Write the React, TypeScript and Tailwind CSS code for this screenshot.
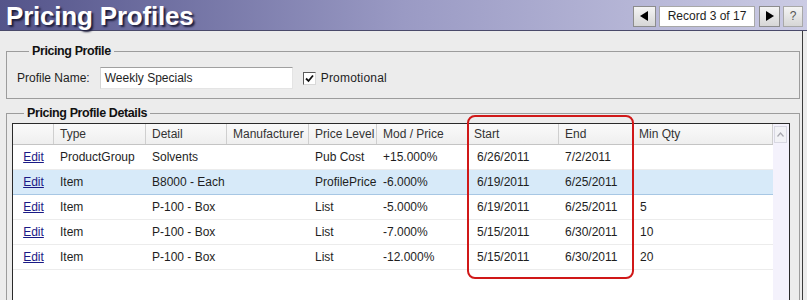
import React from 'react';

interface Row {
  type: string;
  detail: string;
  mfr: string;
  level: string;
  mod: string;
  start: string;
  end: string;
  qty: string;
  selected?: boolean;
}

const rows: Row[] = [
  { type: 'ProductGroup', detail: 'Solvents', mfr: '', level: 'Pub Cost', mod: '+15.000%', start: '6/26/2011', end: '7/2/2011', qty: '' },
  { type: 'Item', detail: 'B8000 - Each', mfr: '', level: 'ProfilePrice', mod: '-6.000%', start: '6/19/2011', end: '6/25/2011', qty: '', selected: true },
  { type: 'Item', detail: 'P-100 - Box', mfr: '', level: 'List', mod: '-5.000%', start: '6/19/2011', end: '6/25/2011', qty: '5' },
  { type: 'Item', detail: 'P-100 - Box', mfr: '', level: 'List', mod: '-7.000%', start: '5/15/2011', end: '6/30/2011', qty: '10' },
  { type: 'Item', detail: 'P-100 - Box', mfr: '', level: 'List', mod: '-12.000%', start: '5/15/2011', end: '6/30/2011', qty: '20' },
];

const headers = ['', 'Type', 'Detail', 'Manufacturer', 'Price Level', 'Mod / Price', 'Start', 'End', 'Min Qty'];

const NavButton: React.FC<{ children: React.ReactNode; className?: string }> = ({ children, className }) => (
  <div
    className={`h-[21px] flex items-center justify-center border border-[#8c8c8c] bg-gradient-to-b from-[#f4f4f4] to-[#d6d6d6] ${className ?? ''}`}
  >
    {children}
  </div>
);

export default function App() {
  return (
    <div
      className="relative w-[807px] h-[300px] overflow-hidden bg-[#ececec] text-[12px] text-[#1e1e1e]"
      style={{ fontFamily: '"Liberation Sans", Arial, sans-serif' }}
    >
      {/* Title bar */}
      <div className="h-[31px] flex items-center justify-between pl-[6px] pr-[4px] bg-gradient-to-r from-[#54548a] via-[#9a9ac4] to-[#cbcbe4] border-b border-[#4a4a6a]">
        <div className="pt-[1px] text-[26px] font-bold text-white leading-none tracking-[-0.2px] [text-shadow:2px_2px_2px_#1c1c3a]">
          Pricing Profiles
        </div>
        <div className="flex items-center pt-[2px]">
          <NavButton className="w-[23px]">
            <svg width="9" height="10" viewBox="0 0 9 10">
              <path d="M8 0 L8 10 L0 5 Z" fill="#000" />
            </svg>
          </NavButton>
          <div className="ml-[3px] w-[96px] h-[21px] flex items-center justify-center bg-white border border-[#a8a8a8]">
            Record 3 of 17
          </div>
          <NavButton className="ml-[4px] w-[21px]">
            <svg width="9" height="10" viewBox="0 0 9 10">
              <path d="M1 0 L1 10 L9 5 Z" fill="#000" />
            </svg>
          </NavButton>
          <NavButton className="ml-[3px] w-[20px] border-[#a8a8a8] text-[#555]">?</NavButton>
        </div>
      </div>

      <div className="pl-[6px] pt-[12px] w-[803px] h-[269px] border-r border-[#3c3c3c]">
        {/* Pricing Profile group */}
        <fieldset className="w-[794px] border border-[#9c9c9c] pl-[10px] pt-[8px] pb-[9px]">
          <legend className="ml-[12px] px-[3px] text-[12.5px] font-bold leading-[16px] tracking-[-0.4px] text-[#111]">
            Pricing Profile
          </legend>
          <div className="flex items-center">
            <span>Profile Name:</span>
            <div className="ml-[10px] w-[193px] h-[22px] flex items-center pl-[4px] bg-white border border-t-[#a0a0a0] border-l-[#d4d4d4] border-b-[#e4e4e4] border-r-[#e4e4e4]">
              Weekly Specials
            </div>
            <div className="ml-[10px] w-[13px] h-[13px] flex items-center justify-center bg-white border border-t-[#5a5a5a] border-l-[#5a5a5a] border-b-[#d8d8d8] border-r-[#d8d8d8]">
              <svg width="9" height="9" viewBox="0 0 9 9">
                <path d="M1 4.5 L3.5 7 L8 1.5" stroke="#111" strokeWidth="1.8" fill="none" />
              </svg>
            </div>
            <span className="ml-[5px] tracking-[0.2px]">Promotional</span>
          </div>
        </fieldset>

        {/* Pricing Profile Details group */}
        <fieldset className="mt-[6px] w-[794px] border border-[#9c9c9c] pl-[5px] pt-[2px]">
          <legend className="ml-[12px] px-[3px] text-[12.5px] font-bold leading-[16px] tracking-[-0.4px] text-[#111]">
            Pricing Profile Details
          </legend>
          <div className="w-[778px] h-[190px] flex border border-[#2a2a2a] bg-white">
            <div className="w-[760px]">
              <div className="grid grid-cols-[41px_92px_81px_82px_68px_91px_91px_74px_140px] h-[21px] bg-gradient-to-b from-[#fafafa] to-[#efefef] border-b border-[#c4c4c4] text-[#333]">
                {headers.map((h, i) => (
                  <div key={i} className="flex items-center pl-[6px] border-r border-[#cfcfcf] whitespace-nowrap overflow-hidden">
                    {h}
                  </div>
                ))}
              </div>
              {rows.map((r, i) => (
                <div
                  key={i}
                  className={`grid grid-cols-[41px_92px_81px_82px_68px_91px_91px_74px_140px] h-[25px] items-center border-b ${
                    r.selected ? 'bg-[#d7eaf9] border-[#a7c7e4]' : 'border-[#ececec]'
                  }`}
                >
                  <div className="text-center text-[#1a1a86] underline">Edit</div>
                  <div className="pl-[6px] whitespace-nowrap">{r.type}</div>
                  <div className="pl-[6px] whitespace-nowrap">{r.detail}</div>
                  <div className="pl-[6px] whitespace-nowrap">{r.mfr}</div>
                  <div className="pl-[6px] whitespace-nowrap">{r.level}</div>
                  <div className="pl-[6px] whitespace-nowrap">{r.mod}</div>
                  <div className="pl-[9px] whitespace-nowrap">{r.start}</div>
                  <div className="pl-[6px] whitespace-nowrap">{r.end}</div>
                  <div className="pl-[7px] whitespace-nowrap">{r.qty}</div>
                </div>
              ))}
            </div>
            {/* Scrollbar */}
            <div className="w-[16px] bg-[#f4f2fc] pt-[2px] pl-[1px]">
              <div className="w-[13px] h-[17px] flex items-center justify-center border border-[#d8d8e2] bg-[#f2f2f6]">
                <svg width="7" height="5" viewBox="0 0 7 5">
                  <path d="M0.5 4.5 L3.5 1 L6.5 4.5" stroke="#a8a8b0" strokeWidth="1.2" fill="none" />
                </svg>
              </div>
            </div>
          </div>
        </fieldset>
      </div>

      {/* Red highlight annotation */}
      <div className="absolute left-[467px] top-[115px] w-[167px] h-[164px] border-2 border-[#d01818] rounded-[8px] pointer-events-none" />
    </div>
  );
}
